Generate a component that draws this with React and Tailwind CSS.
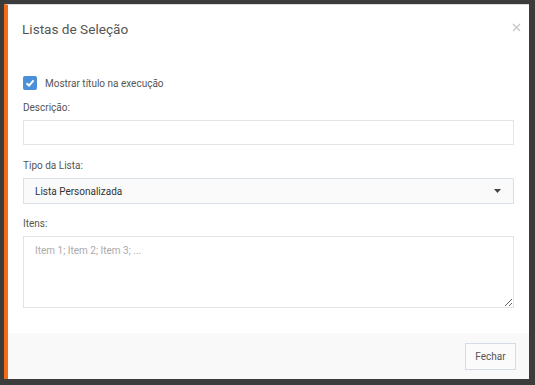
export default function App() {
  return (
    <div className="w-[535px] h-[385px] bg-[#3c3c3c] p-[4px] pr-[6px] pb-[6px]" style={{ fontFamily: 'Roboto, "Open Sans", sans-serif' }}>
      <div className="w-[525px] h-[375px] bg-white border-t border-[#dcdcdc] border-l-[4px] border-l-[#f36c15] flex flex-col">
        <div className="h-[47px] flex items-start justify-between pl-[14px] pr-[8px] pt-[13px]">
          <h4 className="text-[13.6px] leading-[22px] text-[#555] font-normal">Listas de Seleção</h4>
          <svg width="9" height="9" viewBox="0 0 9 9" className="mt-[5px]">
            <path d="M1 1 L8 8 M8 1 L1 8" stroke="#c8c8c8" strokeWidth="1.4" />
          </svg>
        </div>
        <div className="flex-1 px-[15px] pt-[24px]">
          <label className="flex items-center gap-[8px] h-[14px]">
            <span className="w-[14px] h-[14px] rounded-[2px] bg-[#4a8fd8] flex items-center justify-center">
              <svg width="10" height="10" viewBox="0 0 10 10">
                <path d="M1.5 5.2 L4 7.6 L8.6 2.4" stroke="white" strokeWidth="2" fill="none" />
              </svg>
            </span>
            <span className="text-[10px] text-[#555]">Mostrar título na execução</span>
          </label>
          <div className="mt-[10px] text-[10px] leading-[16px] text-[#555]">Descrição:</div>
          <div className="mt-[4px] h-[25px] border border-[#e4e4e4] bg-white"></div>
          <div className="mt-[13px] text-[10px] leading-[16px] text-[#555]">Tipo da Lista:</div>
          <div className="mt-[4px] h-[26px] border border-[#dae0e7] bg-[#fafafa] flex items-center justify-between pl-[11px] pr-[12px]">
            <span className="text-[10px] text-[#333]">Lista Personalizada</span>
            <svg width="7" height="4" viewBox="0 0 7 4">
              <path d="M0 0 L7 0 L3.5 4 Z" fill="#444" />
            </svg>
          </div>
          <div className="mt-[12px] text-[10px] leading-[16px] text-[#555]">Itens:</div>
          <textarea
            className="mt-[4px] block w-full h-[72px] border border-[#e4e4e4] bg-white px-[11px] py-[6px] text-[10px] text-[#555] placeholder:text-[#aaa] outline-none"
            placeholder="Item 1; Item 2; Item 3; ..."
          ></textarea>
        </div>
        <div className="h-[46px] bg-[#f9f9f9] flex items-center justify-end pr-[13px]">
          <button className="w-[51px] h-[27px] border border-[#d5dce5] bg-[#fbfbfb] text-[10px] text-[#555]">Fechar</button>
        </div>
      </div>
    </div>
  );
}
